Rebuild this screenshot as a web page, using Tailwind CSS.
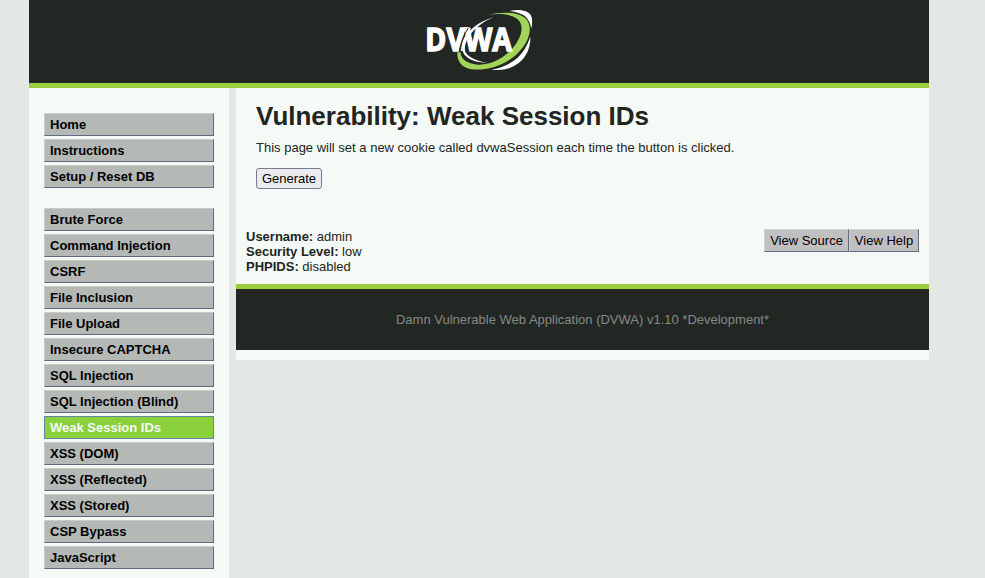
<!DOCTYPE html>
<html lang="en">
<head>
<meta charset="utf-8">
<title>Vulnerability: Weak Session IDs</title>
<script src="https://cdn.jsdelivr.net/npm/@tailwindcss/browser@4"></script>
</head>
<body class="h-[578px] overflow-hidden bg-[#e3e8e4] font-['Liberation_Sans',Arial,sans-serif] text-[13px] leading-[15px] text-[#222522]">
<div class="ml-[29px] flex h-full w-[900px] flex-col">
  <header class="flex h-[88px] shrink-0 border-b-5 border-[#98ce3e] bg-[#232724] pl-[386px]">
    <svg class="h-[83px] w-[130px]" viewBox="0 0 390 249" role="img" aria-label="DVWA">
      <path fill="#fff" d="M283 33C315 26 342 32 349 49Q354 62 349 86Q345 64 333 51Q317 37 283 33Z"/>
      <path fill="#fff" d="M346 110C347 139 337 169 310 190Q279 215 229 209Q275 202 308 173Q333 149 346 110Z"/>
      <path fill="#fff" d="M237 51C190 66 158 89 143 125C134 151 147 187 217 188Q164 179 151 155C143 126 174 77 237 51Z"/>
      <path fill="#a3d45a" d="M217 44C268 33 312 37 332 55C355 80 345 122 309 159C265 202 205 214 165 207C137 202 126 181 127 157L136 157C139 178 155 191 188 194C228 196 266 175 292 146C320 112 330 77 307 57C288 42 254 39 217 44Z"/>
      <text x="31" y="153" fill="#fff" stroke="#fff" stroke-width="4.5" font-family="Open Sans, sans-serif" font-size="97" font-weight="700" textLength="260" lengthAdjust="spacingAndGlyphs">DVWA</text>
      <path fill="none" stroke="#232724" stroke-width="3" d="M160 84Q139 115 133 153"/>
      <path fill="none" stroke="#fff" stroke-width="4" d="M166 84Q145 115 139 153"/>
    </svg>
  </header>
  <div class="flex min-h-0 grow items-start justify-between">
    <nav class="h-full w-[200px] bg-[#f5faf6] px-[15px] pt-[25px] font-bold text-black">
      <ul class="mb-[20px] flex flex-col gap-[3px] *:h-[23px] *:border *:border-t-[#c8cdc9] *:border-l-[#c8cdc9] *:border-r-[#5f6b85] *:border-b-[#5f6b85] *:bg-[#b4b9b5] *:px-[5px] *:pt-[3px]">
        <li>Home</li><li>Instructions</li><li>Setup / Reset DB</li>
      </ul>
      <ul class="flex flex-col gap-[3px] *:h-[23px] *:border *:px-[5px] *:pt-[3px] [&>li:not([aria-current])]:border-t-[#c8cdc9] [&>li:not([aria-current])]:border-l-[#c8cdc9] [&>li:not([aria-current])]:border-r-[#5f6b85] [&>li:not([aria-current])]:border-b-[#5f6b85] [&>li:not([aria-current])]:bg-[#b4b9b5]">
        <li>Brute Force</li><li>Command Injection</li><li>CSRF</li><li>File Inclusion</li><li>File Upload</li><li>Insecure CAPTCHA</li><li>SQL Injection</li><li>SQL Injection (Blind)</li>
        <li aria-current="page" class="border-[#6584a0] bg-[#8bd03d] text-[#f5faf6]">Weak Session IDs</li>
        <li>XSS (DOM)</li><li>XSS (Reflected)</li><li>XSS (Stored)</li><li>CSP Bypass</li><li>JavaScript</li>
      </ul>
    </nav>
    <div class="w-[693px] bg-[#f5faf6] pb-[10px]">
      <main class="h-[141px] px-[20px] pt-[13px]">
        <h1 class="text-[26px] leading-[30px] font-bold">Vulnerability: Weak Session IDs</h1>
        <p class="mt-[9px]">This page will set a new cookie called dvwaSession each time the button is clicked.</p>
        <button class="mt-[13px] block h-[21px] w-[66px] rounded-[3px] border border-[#777b8c] bg-[#ececee] text-center leading-[19px] text-black">Generate</button>
      </main>
      <section class="flex h-[55px] justify-between px-[10px]">
        <div><b>Username:</b> admin<br><b>Security Level:</b> low<br><b>PHPIDS:</b> disabled</div>
        <div class="flex text-black *:h-[23px] *:border *:border-t-[#cdd2cf] *:border-l-[#cdd2cf] *:border-r-[#5f6b85] *:border-b-[#5f6b85] *:bg-[#c0c0c0] *:text-center *:leading-[21px]">
          <button class="w-[85px]">View Source</button><button class="w-[70px]">View Help</button>
        </div>
      </section>
      <footer class="h-[66px] border-t-5 border-[#98ce3e] bg-[#232724] pt-[23px] text-center text-[#858986]">Damn Vulnerable Web Application (DVWA) v1.10 *Development*</footer>
    </div>
  </div>
</div>
</body>
</html>
